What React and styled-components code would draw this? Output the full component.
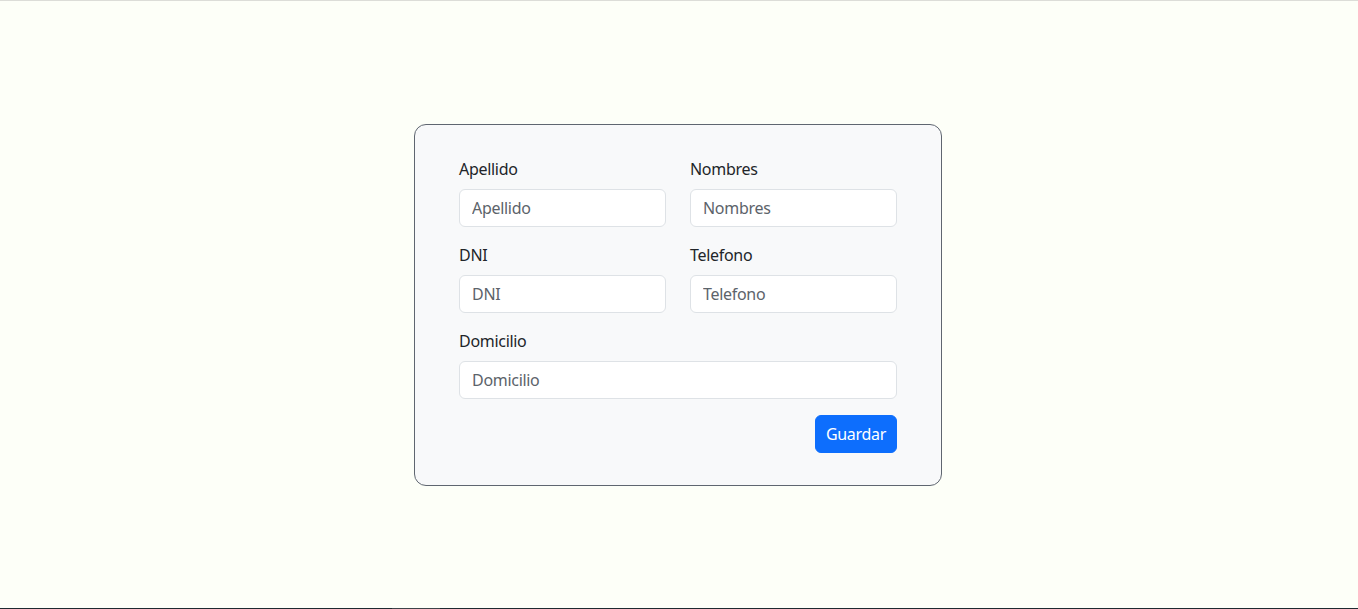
import React from 'react';
import styled, {createGlobalStyle} from 'styled-components';

const Global = createGlobalStyle`
    html, body {
        margin: 0;
        padding: 0;
    }
    body {
        background-color: #fdfff8;
        font-family: "Noto Sans", "Open Sans", sans-serif;
        font-size: 16px;
        letter-spacing: -0.3px;
        color: #212529;
    }
    * {
        box-sizing: border-box;
    }
`;

const Page = styled.div`
    height: 609px;
    display: flex;
    flex-direction: column;
    border-top: 1px solid #dcddd8;
`;

const Main = styled.main`
    flex: 1;
    display: flex;
    align-items: center;
    justify-content: center;
`;

const BottomLine = styled.div`
    height: 1px;
    background-color: #1e2a30;
    display: flex;
    padding-left: 392px;
`;

const BottomSegment = styled.span`
    width: 48px;
    height: 1px;
    background-color: #3d4449;
`;

const Card = styled.form`
    width: 528px;
    margin-right: 2px;
    background-color: #f8f9fa;
    border: 1px solid #5f6670;
    border-radius: 12px;
    padding: 32px 44px;
    display: flex;
    flex-direction: column;
    gap: 16px;
`;

const Row = styled.div`
    display: grid;
    grid-template-columns: ${props => props.cols === 1 ? 'minmax(0, 1fr)' : 'minmax(0, 1fr) minmax(0, 1fr)'};
    column-gap: 24px;
`;

const Field = styled.div`
    display: flex;
    flex-direction: column;
    min-width: 0;
`;

const Label = styled.label`
    line-height: 24px;
    margin-bottom: 8px;
    color: #212529;
`;

const Input = styled.input`
    width: 100%;
    height: 38px;
    padding: 6px 12px;
    font-family: inherit;
    font-size: 16px;
    letter-spacing: inherit;
    color: #212529;
    background-color: #fff;
    border: 1px solid #dee2e6;
    border-radius: 6px;
    outline: none;
    &::placeholder {
        color: #5c636a;
    }
`;

const Actions = styled.div`
    display: flex;
    justify-content: flex-end;
`;

const Button = styled.button`
    height: 38px;
    padding: 0 10px;
    font-family: inherit;
    font-size: 16px;
    letter-spacing: inherit;
    color: #fff;
    background-color: #0d6efd;
    border: 1px solid #0d6efd;
    border-radius: 6px;
    cursor: pointer;
`;

const FormField = ({name, id}) => (
    <Field>
        <Label htmlFor={id}>{name}</Label>
        <Input id={id} placeholder={name}/>
    </Field>
);

const App = () => {
    return (
        <Page>
            <Global/>
            <Main>
                <Card onSubmit={e => e.preventDefault()}>
                    <Row>
                        <FormField name="Apellido" id="apellido"/>
                        <FormField name="Nombres" id="nombres"/>
                    </Row>
                    <Row>
                        <FormField name="DNI" id="dni"/>
                        <FormField name="Telefono" id="telefono"/>
                    </Row>
                    <Row cols={1}>
                        <FormField name="Domicilio" id="domicilio"/>
                    </Row>
                    <Actions>
                        <Button type="submit">Guardar</Button>
                    </Actions>
                </Card>
            </Main>
            <BottomLine>
                <BottomSegment/>
            </BottomLine>
        </Page>
    )
}

export default App;
